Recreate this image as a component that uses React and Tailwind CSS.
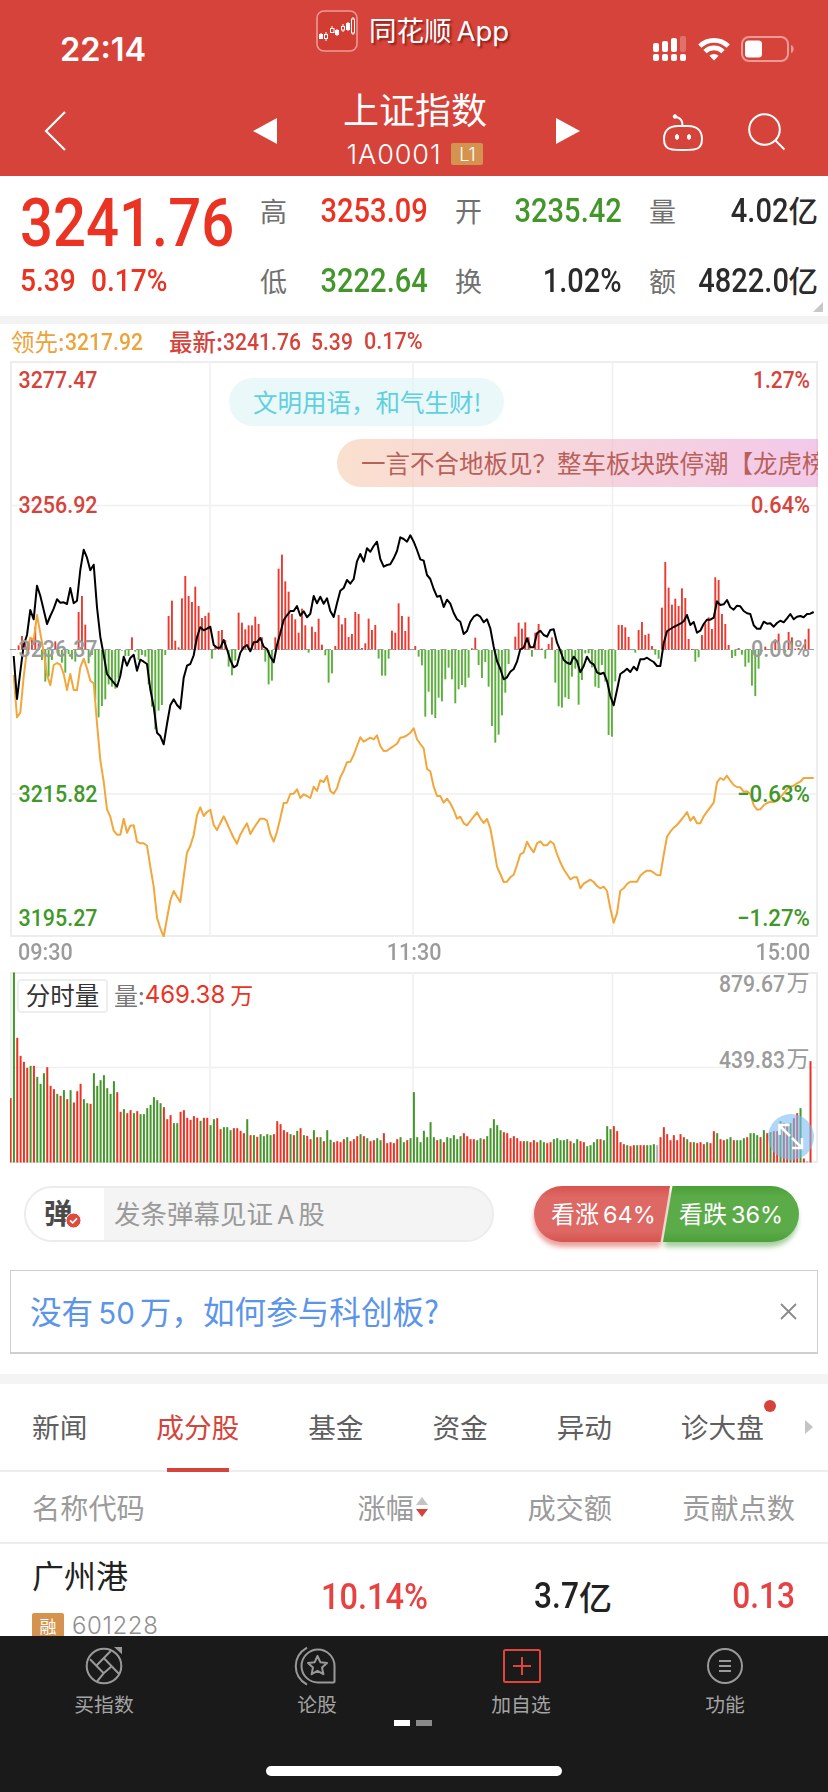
import React from 'react';

// one entry per minute, in thirds of a pixel
const PRICE = [
  378, 507, 425, 345, 315, 240, 268, 167, 197, 240, 282, 258, 236, 208, 218, 217, 222, 174, 220, 212,
  120, 59, 83, 121, 104, 232, 320, 375, 432, 445, 458, 470, 438, 380, 407, 384, 374, 422, 389, 395,
  402, 478, 530, 608, 618, 643, 582, 526, 508, 525, 536, 443, 407, 402, 376, 322, 292, 301, 296, 290,
  345, 353, 353, 330, 358, 390, 412, 406, 368, 352, 345, 364, 337, 336, 324, 350, 357, 380, 397, 345,
  310, 270, 256, 243, 243, 228, 257, 244, 262, 251, 198, 220, 200, 221, 205, 243, 261, 220, 182, 174,
  150, 161, 147, 94, 72, 95, 55, 65, 48, 35, 87, 110, 105, 103, 85, 63, 22, 27, 35, 16,
  35, 60, 88, 92, 135, 147, 177, 200, 197, 231, 209, 221, 249, 268, 275, 312, 303, 275, 260, 254,
  260, 277, 268, 295, 350, 393, 417, 448, 442, 425, 417, 395, 358, 353, 325, 352, 352, 310, 302, 315,
  320, 300, 298, 338, 362, 390, 398, 402, 380, 393, 427, 408, 380, 397, 403, 427, 432, 428, 453, 498,
  526, 480, 432, 425, 416, 426, 410, 421, 388, 388, 383, 390, 396, 408, 408, 340, 304, 297, 291, 286,
  281, 274, 255, 285, 276, 308, 302, 282, 269, 269, 263, 214, 225, 223, 210, 232, 239, 227, 229, 243,
  250, 252, 286, 296, 296, 275, 281, 280, 290, 279, 272, 277, 265, 252, 268, 260, 258, 262, 252, 251,
  246,
];

const LEAD = [
  435, 562, 548, 440, 360, 323, 330, 255, 310, 365, 435, 466, 405, 399, 404, 432, 480, 432, 480, 480,
  412, 386, 415, 452, 460, 580, 690, 755, 838, 860, 902, 914, 914, 866, 908, 887, 886, 935, 940, 940,
  947, 1010, 1070, 1163, 1195, 1220, 1165, 1112, 1083, 1100, 1116, 1040, 968, 948, 915, 856, 832, 858, 846, 839,
  885, 900, 880, 859, 880, 902, 924, 941, 914, 896, 880, 912, 895, 880, 866, 866, 872, 912, 935, 905,
  865, 819, 818, 792, 791, 778, 804, 793, 798, 804, 770, 783, 751, 756, 738, 783, 791, 775, 742, 722,
  697, 695, 675, 648, 622, 635, 629, 623, 628, 616, 648, 663, 662, 655, 648, 641, 623, 621, 616, 608,
  595, 628, 642, 655, 717, 724, 770, 798, 798, 818, 806, 820, 840, 866, 860, 880, 886, 873, 860, 847,
  865, 879, 867, 895, 950, 1010, 1032, 1056, 1055, 1042, 1034, 1005, 973, 967, 935, 953, 967, 940, 934, 946,
  946, 934, 941, 972, 997, 1018, 1033, 1048, 1042, 1042, 1075, 1061, 1055, 1049, 1056, 1068, 1075, 1070, 1083, 1135,
  1178, 1150, 1082, 1075, 1062, 1055, 1055, 1055, 1037, 1028, 1022, 1022, 1028, 1035, 1036, 975, 920, 905, 893, 885,
  873, 860, 846, 872, 860, 880, 880, 859, 845, 832, 818, 757, 744, 750, 737, 752, 765, 771, 772, 785,
  784, 792, 825, 839, 838, 826, 819, 815, 817, 812, 802, 790, 778, 770, 767, 760, 755, 744, 744, 744,
  744,
];

// positive is drawn up in red, negative down in green
const FORCE = [
  2, 14, 42, 20, 20, 35, 70, 20, -30, -95, -80, -30, 26, -18, -38, -68, -12, -28, -35, 114,
  162, 76, -40, -15, -150, -202, -168, -148, -103, -110, -116, -85, -2, -18, -18, 38, -5, -30, -15, -20,
  -103, -170, -238, -182, -165, -15, 102, 148, 28, 8, 155, 222, 162, 144, 190, 132, 96, 102, 112, -26,
  14, 57, 60, 30, -50, -76, -32, 112, 82, 62, 74, 74, 100, 78, 38, -35, -103, -92, 38, 244,
  286, 206, 175, 108, 92, 52, 124, 74, -8, 70, 54, 94, 16, -16, -98, -70, 12, 105, 77, 96,
  39, 48, 114, 108, 6, 20, 94, 60, 75, -26, -77, -77, -26, 58, 52, 140, 102, 57, 100, 2,
  12, -20, -46, -200, -125, -194, -204, -143, -154, -88, -53, -88, -160, -118, -105, -112, -83, 5, 37, -45,
  -84, -36, -110, -228, -278, -254, -196, -128, -42, 0, 40, 82, 64, 83, 38, -20, 52, 78, 4, -26,
  18, 38, -98, -169, -173, -142, -147, -80, -56, -164, -90, -10, -10, -52, -110, -114, -45, -95, -255, -260,
  -94, 75, 75, 68, 39, 0, -8, 60, 84, 45, 49, 12, -14, -26, 127, 264, 187, 136, 154, 132,
  185, 156, 33, 3, -35, -22, 45, 80, 98, 63, 218, 210, 108, 78, 15, -24, -18, 6, -14, -50,
  -38, -107, -138, -56, -4, 10, 2, -8, 32, 49, 2, -8, 54, 38, 4, 6, 4, 32, 64,
];

// sign carries the colour: positive red, negative green
const VOLUME = [
  193, -570, 374, 320, 302, 284, -290, 290, -257, -236, -268, 286, 230, 220, -206, 200, -217, 190, -217, 180,
  214, 236, -190, -178, 176, -268, -230, -247, -262, -223, -206, -244, 211, 152, -160, 148, 157, -148, 154, -145,
  -145, -163, -173, -196, -187, -178, 166, 130, 142, -118, -118, 152, 157, 134, 128, 139, 134, -125, 134, 134,
  -112, -130, 133, 100, -106, -106, -97, 103, 103, 95, 88, -130, 82, -82, 77, -85, -79, -85, -82, 85,
  124, 115, 97, 91, -85, 82, -95, 103, -82, 80, 70, -97, 76, -76, 64, -97, -68, 61, 64, 61,
  70, -76, 64, 70, 79, -85, 79, -73, 64, 67, -73, -67, 88, 58, 61, 58, 70, -76, -61, 67,
  -73, -211, -76, -61, -95, -76, -121, -76, 67, -70, 61, -76, -73, -82, -70, -79, 88, 79, 70, 70,
  -67, -73, 70, -79, -103, -130, -112, -97, 91, 88, 73, 79, 73, 64, 64, -64, 61, 67, 61, -67,
  -61, 58, 61, -70, -73, -67, -67, -70, 64, -58, -70, 64, 61, -49, -52, -61, -70, 70, -67, -109,
  -100, 109, 94, 61, 55, -52, 49, 52, -52, 52, 52, -52, -52, -55, 52, 76, 106, 85, 67, 82,
  67, 85, 76, -70, 61, -61, 58, 61, 55, -61, 58, 94, -88, 70, 67, -70, -76, 67, -67, -67,
  -73, 76, -88, -88, -82, 76, -97, 88, -91, 94, 94, -124, 118, 115, -118, 133, 148, -163, 12, 4,
  304,
];
const FLAT_MINUTES = [194, 239];

const toPoints = (series) => series.map((v, i) => `${((11 + i * 10) / 3).toFixed(1)},${((v + 507) / 3).toFixed(1)}`).join(' ');

const volumeColor = (v, i) => {
  if (FLAT_MINUTES.includes(i)) return '#b0b0b0';
  return v > 0 ? '#ea3323' : '#43962a';
};

// narrow numerals
const Num = ({ children, className = '' }) => (
  <span className={`inline-block whitespace-nowrap font-[Roboto] font-medium leading-none scale-x-[0.88] ${className}`}>
    {children}
  </span>
);

const StatusBar = () => (
  <div className="relative h-[88px]">
    <span className="absolute left-[60px] top-[34px] font-[Inter] text-[32.500px] font-semibold leading-8">22:14</span>
    <div className="absolute left-[316px] top-[10px] flex items-center gap-[11px]">
      <svg width="42" height="42" viewBox="0 0 42 42" fill="none">
        <rect x="1" y="1" width="40" height="40" rx="7" fill="#d13c33" stroke="#ec9a95" strokeWidth="1.6" />
        <g stroke="#fff" strokeWidth="1">
          <path d="M5 23v6M10 22v9M16 16v7M21 19v7M27 14v8M32 12v9M37 7v18" />
          <rect x="3.500" y="24.500" width="3" height="4" fill="#fff" />
          <rect x="8.500" y="24.500" width="3" height="4" fill="#d13c33" />
          <rect x="14.500" y="18.500" width="3.500" height="4" fill="#d13c33" />
          <rect x="19.500" y="20.500" width="3" height="4" fill="#fff" />
          <rect x="25.500" y="16.500" width="3" height="3.500" fill="#d13c33" />
          <rect x="30.500" y="13.500" width="3" height="6" fill="#fff" />
          <rect x="35.500" y="9" width="3" height="14" fill="#d13c33" />
        </g>
      </svg>
      <span className="text-[27.5px] leading-none [text-shadow:2px_2px_2px_rgba(90,10,5,0.6)]">
        同花顺<span className="ml-[5px] font-[Inter] text-[27.500px]">App</span>
      </span>
    </div>
    <div className="absolute left-[653px] top-[36px] flex items-center">
      <svg width="34" height="26" viewBox="0 0 34 26" fill="#fff">
        <rect x="0" y="7" width="6" height="9" rx="2" />
        <rect x="9" y="5" width="6" height="11" rx="2" />
        <rect x="18" y="2" width="6" height="14" rx="2" />
        <rect x="27" y="0" width="6" height="16" rx="2" opacity=".25" />
        <rect x="0" y="18" width="6" height="7" rx="2" />
        <rect x="9" y="18" width="6" height="7" rx="2" />
        <rect x="18" y="18" width="6" height="7" rx="2" />
        <rect x="27" y="18" width="6" height="7" rx="2" />
      </svg>
      <svg className="ml-[11px]" width="32" height="24" viewBox="0 0 32 24" fill="none" stroke="#fff" strokeWidth="4.600">
        <path d="M1.800 9.200a20.300 20.300 0 0 1 28.400 0" />
        <path d="M7 14.600a12.700 12.700 0 0 1 18 0" />
        <path d="M16 23.500l-4.600-4.700a6.500 6.500 0 0 1 9.200 0z" fill="#fff" stroke="none" />
      </svg>
      <svg className="ml-[11px]" width="54" height="26" viewBox="0 0 54 26" fill="none">
        <rect x="1" y="1" width="46" height="24" rx="7" stroke="#ec9a95" strokeWidth="2" />
        <rect x="4" y="4.500" width="17" height="17" rx="3.500" fill="#fff" />
        <path d="M50 9c3.500 1 3.500 7 0 8z" fill="#ec9a95" />
      </svg>
    </div>
  </div>
);

const TitleBar = () => (
  <div className="flex h-[88px] items-center justify-between pl-[44px] pr-[42px]">
    <div className="flex w-[233px] items-center justify-between">
      <svg className="mt-[-2px]" width="22" height="40" viewBox="0 0 22 40" fill="none" stroke="#fff" strokeWidth="2.200">
        <path d="M21 1L2 20l19 19" />
      </svg>
      <svg className="mt-[-2px]" width="24" height="26" viewBox="0 0 24 26" fill="#fff"><path d="M24 0v26L0 13z" /></svg>
    </div>
    <div className="flex flex-col items-center pr-[3px]">
      <h1 className="mt-[-10px] text-[36px] font-normal leading-[42px]">上证指数</h1>
      <div className="mt-[12px] flex items-center gap-[10px]">
        <span className="font-[Inter] text-[27px] font-light leading-[27px] tracking-[0.9px]">1A0001</span>
        <span className="flex h-[22px] w-8 items-center justify-center rounded-[2px] bg-[#d49450] font-[Inter] text-[18px] font-light">L1</span>
      </div>
    </div>
    <div className="flex w-[230px] items-center">
      <svg className="mt-[-2px]" width="24" height="26" viewBox="0 0 24 26" fill="#fff"><path d="M0 0v26l24-13z" /></svg>
      <svg className="ml-[83px]" width="40" height="38" viewBox="0 0 40 38" fill="none" stroke="#fff" strokeWidth="2">
        <path d="M15 13h10c9 0 14 5 14 13 0 7-3 10-8 10.500-8 .7-15 .7-22 0C4 36 1 33 1 26 1 18 6 13 15 13z" />
        <path d="M19.500 13c0-5-1-8-8-9.500" />
        <circle cx="12" cy="3.500" r="1.800" fill="#fff" strokeWidth="1" />
        <ellipse cx="14" cy="24" rx="1.600" ry="2.400" fill="#fff" strokeWidth="1" />
        <ellipse cx="26" cy="24" rx="1.600" ry="2.400" fill="#fff" strokeWidth="1" />
      </svg>
      <svg className="ml-[45px] mt-[-1px]" width="38" height="38" viewBox="0 0 38 38" fill="none" stroke="#fff" strokeWidth="2">
        <circle cx="16.500" cy="16.500" r="15.300" />
        <path d="M27.500 27.500l9 9" />
      </svg>
    </div>
  </div>
);

const QUOTES = [
  { label: '高', value: '3253.09', color: 'text-[#ea3323]' },
  { label: '开', value: '3235.42', color: 'text-[#43962a]' },
  { label: '量', value: '4.02', unit: '亿', color: 'text-[#2b2b2b]' },
  { label: '低', value: '3222.64', color: 'text-[#43962a]' },
  { label: '换', value: '1.02%', color: 'text-[#2b2b2b]' },
  { label: '额', value: '4822.0', unit: '亿', color: 'text-[#2b2b2b]' },
];

const QuotePanel = () => (
  <section className="relative flex h-[140px] pl-[20px]">
    <div className="w-[240px] text-[#ea3323]">
      <Num className="mt-[15px] origin-left text-[66px]">3241.76</Num>
      <div className="mt-[7px] flex text-[32px]">
        <Num className="w-[71px] origin-left">5.39</Num>
        <Num className="origin-left">0.17%</Num>
      </div>
    </div>
    <div className="grid w-[559px] grid-cols-[168px_167px_169px] grid-rows-[70px_70px] gap-x-[27px] pb-[2px]">
      {QUOTES.map(({ label, value, unit, color }) => (
        <div key={label} className="flex items-center justify-between pb-[2px]">
          <span className="text-[27px] leading-none text-[#707070]">{label}</span>
          <span className={`flex items-center ${color}`}>
            <Num className="origin-right text-[33px]">{value}</Num>
            {unit && <span className="text-[29.500px] font-medium leading-none">{unit}</span>}
          </span>
        </div>
      ))}
    </div>
    <span className="absolute bottom-1 right-[5px] border-b-[10px] border-l-[10px] border-b-[#c8c8c8] border-l-transparent" />
  </section>
);

const AXIS_LEFT = [
  ['3277.47', 27, '#d6433b'],
  ['3256.92', 152, '#d6433b'],
  ['3236.37', 296, '#9b9b9b'],
  ['3215.82', 441, '#3f9828'],
  ['3195.27', 565, '#3f9828'],
];

const AXIS_RIGHT = [
  ['1.27%', 27, 57, '#d6433b'],
  ['0.64%', 152, 59, '#d6433b'],
  ['0.00%', 296, 59, '#9b9b9b'],
  ['−0.63%', 441, 73, '#3f9828'],
  ['−1.27%', 565, 73, '#3f9828'],
];

const PriceChart = () => (
  <div className="relative mx-[10px] h-[576px] overflow-hidden">
    <svg width="808" height="576" viewBox="0 0 808 576" fill="none">
      <rect x="1" y="1" width="806" height="574" stroke="#ededed" strokeWidth="2" />
      <path d="M200 0v576M403 0v576M602.500 0v576M0 144.500h808M0 433h808" stroke="#f0f0f0" strokeWidth="1.600" />
      {FORCE.map((v, i) => (
        <rect
          key={i}
          x={(13 + i * 10) / 3}
          y={v > 0 ? 289 - v / 3 : 289}
          width="1.900"
          height={Math.abs(v) / 3}
          fill={v > 0 ? '#e93b30' : '#5cb03c'}
        />
      ))}
      <path d="M0 288.500h808" stroke="#9a9a9a" strokeWidth="1.200" strokeDasharray="6 4.500" />
      <polyline points={toPoints(LEAD)} stroke="#f2a73c" strokeWidth="2" strokeLinejoin="round" />
      <polyline points={toPoints(PRICE)} stroke="#000" strokeWidth="2" strokeLinejoin="round" />
      <g fontFamily="Roboto" fontSize="23.500" fontWeight="500">
        {AXIS_LEFT.map(([label, y, color]) => (
          <text key={label} x="8.500" y={y} fill={color} textLength="79" lengthAdjust="spacingAndGlyphs">{label}</text>
        ))}
        {AXIS_RIGHT.map(([label, y, width, color]) => (
          <text key={label} x="800" y={y} fill={color} textAnchor="end" textLength={width} lengthAdjust="spacingAndGlyphs">{label}</text>
        ))}
      </g>
    </svg>
    <div className="absolute left-[219px] top-[17px] flex h-12 w-[275px] items-center rounded-full bg-[#d8f3f6]/55 pl-[24px] text-[24.500px] text-[#5fd0de]">
      文明用语，和气生财!
    </div>
    <div className="absolute left-[327px] top-[78px] flex h-12 w-[560px] items-center whitespace-nowrap rounded-l-full bg-linear-to-r from-[#f7cfb4]/65 to-[#eaa5e2]/65 pl-[24px] text-[24.500px] text-[#b8605a]">
      一言不合地板见？整车板块跌停潮【龙虎榜
    </div>
  </div>
);

const VolumeChart = () => (
  <div className="relative mx-[10px] h-[192px]">
    <svg width="808" height="192" viewBox="0 0 808 192" fill="none">
      <rect x="1" y="1" width="806" height="189" stroke="#ededed" strokeWidth="2" />
      <path d="M200 0v190M403 0v190M602.500 0v190M0 95.500h808" stroke="#f0f0f0" strokeWidth="1.600" />
      {VOLUME.map((v, i) => (
        <rect key={i} x={i * 3.333 - 0.400} y={190.500 - Math.abs(v) / 3} width="2" height={Math.abs(v) / 3} fill={volumeColor(v, i)} />
      ))}
      <g fontFamily="Roboto" fontSize="23.500" fontWeight="500" fill="#9b9b9b" textAnchor="end">
        <text x="775" y="19.500" textLength="66" lengthAdjust="spacingAndGlyphs">879.67</text>
        <text x="775" y="95.500" textLength="66" lengthAdjust="spacingAndGlyphs">439.83</text>
      </g>
      <g fontFamily="'Noto Sans CJK SC'" fontSize="23" fill="#9b9b9b" textAnchor="end">
        <text x="799.500" y="19">万</text>
        <text x="799.500" y="95">万</text>
      </g>
      <circle cx="781" cy="165" r="23" fill="#7bbcf2" opacity=".6" />
      <path d="M780 164l-10-10M769.500 163v-10h10M782 166l9.500 9.500M792 166v10h-10" stroke="#fff" strokeWidth="2.500" />
    </svg>
    <div className="absolute left-[7px] top-[7px] flex items-center">
      <span className="flex h-[34px] w-[91px] items-center justify-center rounded border-2 border-[#eee] bg-white pb-[1px] text-[24.500px] leading-none text-[#333]">分时量</span>
      <span className="ml-[6px] mt-[-3px] text-[24px] leading-none text-[#777]">量:</span>
      <span className="mt-[-3px] flex items-center gap-[5px] text-[#ea3323]">
        <span className="font-[Inter] text-[24px] leading-none">469.38</span>
        <span className="text-[23px] leading-none">万</span>
      </span>
    </div>
  </div>
);

const BarrageRow = () => (
  <div className="flex h-[106px] items-start justify-between pl-[24px] pr-[29px] pt-[22px]">
    <div className="flex h-[56px] w-[470px] items-center overflow-hidden rounded-full border-2 border-[#ececec] bg-[#f4f4f4]">
      <div className="relative flex h-full w-[78px] items-center bg-white pb-[3px] pl-[18px]">
        <span className="text-[28.500px] font-bold leading-none text-[#4a4a4a]">弹</span>
        <svg className="absolute left-[39px] top-[24px]" width="17" height="17" viewBox="0 0 17 17" fill="none">
          <circle cx="8.500" cy="8.500" r="7.500" fill="#de4a3c" stroke="#fff" />
          <path d="M5 8.300l2.700 2.600L12 6.300" stroke="#fff" strokeWidth="1.700" />
        </svg>
      </div>
      <span className="pl-[10px] text-[26.500px] leading-none text-[#9a9a9a]">
        发条弹幕见证<span className="mx-[4px] font-[Inter] text-[25px]">A</span>股
      </span>
    </div>
    <div className="relative h-[56px] w-[265px] text-[24px] text-white">
      <svg className="absolute inset-0 overflow-visible" width="265" height="56" viewBox="0 0 265 56">
        <defs>
          <filter id="glow" x="-10%" y="-20%" width="120%" height="150%"><feGaussianBlur stdDeviation="2.500" /></filter>
          <linearGradient id="up" x1="0" y1="0" x2="0" y2="1">
            <stop offset="0" stopColor="#d6544f" /><stop offset=".2" stopColor="#de6864" /><stop offset=".8" stopColor="#de6864" /><stop offset="1" stopColor="#d5544e" />
          </linearGradient>
          <linearGradient id="down" x1="0" y1="0" x2="0" y2="1">
            <stop offset="0" stopColor="#4b9f38" /><stop offset=".2" stopColor="#5cab49" /><stop offset=".8" stopColor="#5cab49" /><stop offset="1" stopColor="#4b9f38" />
          </linearGradient>
        </defs>
        <path d="M28 5H136L126 61H28A28 28 0 0 1 28 5z" fill="#d6433b" opacity=".5" filter="url(#glow)" />
        <path d="M140 5H236A28 28 0 0 1 236 61H130z" fill="#4b9f38" opacity=".5" filter="url(#glow)" />
        <path d="M28 0H136L126.500 56H28A28 28 0 0 1 28 0z" fill="url(#up)" />
        <path d="M138.500 0H237A28 28 0 0 1 237 56H129z" fill="url(#down)" />
      </svg>
      <div className="relative flex h-full items-center pl-[17px] leading-none">
        <span className="w-[128px]">看涨<span className="ml-[4px] font-[Inter] text-[23.500px]">64%</span></span>
        <span>看跌<span className="ml-[4px] font-[Inter] text-[23.500px]">36%</span></span>
      </div>
    </div>
  </div>
);

const Promo = () => (
  <div className="mx-[10px] flex h-[84px] items-center justify-between border border-b-2 border-[#cfcfcf] pl-[19px] pr-[20px]">
    <span className="text-[31.600px] leading-none text-[#5b95ea]">
      没有<span className="mx-[5px] font-[Inter] text-[29.500px]">50</span>万，如何参与科创板?
    </span>
    <svg width="17" height="17" viewBox="0 0 17 17" stroke="#8a8a8a" strokeWidth="1.800"><path d="M1 1l15 15M16 1L1 16" /></svg>
  </div>
);

const TABS = ['新闻', '成分股', '基金', '资金', '异动', '诊大盘'];

const Tabs = () => (
  <nav className="relative flex h-[88px] items-center justify-between border-b-2 border-[#ededed] pl-8 pr-[15px] text-[27.700px] text-[#5f5f5f]">
    <div className="flex h-full w-[732px] items-center justify-between">
      {TABS.map((tab) => (
        <span key={tab} className={`relative flex h-full items-center ${tab === '成分股' ? 'text-[#d6433b]' : ''}`}>
          {tab}
          {tab === '成分股' && <i className="absolute bottom-[-2px] left-[11px] h-1 w-[62px] bg-[#d6433b]" />}
          {tab === '诊大盘' && <i className="absolute right-[-12px] top-4 h-3 w-3 rounded-full bg-[#d6433b]" />}
        </span>
      ))}
    </div>
    <svg width="8" height="14" viewBox="0 0 8 14" fill="#c4c4c4"><path d="M0 0v14l8-7z" /></svg>
  </nav>
);

const StockTable = () => (
  <section className="h-[164px] overflow-hidden">
    <div className="grid h-[72px] grid-cols-[250px_146px_184px_183px] items-center border-b-2 border-[#ededed] pl-8 text-right text-[28.200px] text-[#9b9b9b]">
      <span className="text-left">名称代码</span>
      <span className="flex items-center justify-end gap-[2px]">
        涨幅
        <svg width="12" height="22" viewBox="0 0 12 22"><path d="M0 9l6-8 6 8z" fill="#c4c4c4" /><path d="M0 13l6 8 6-8z" fill="#d6433b" /></svg>
      </span>
      <span>成交额</span>
      <span>贡献点数</span>
    </div>
    <div className="grid h-[104px] grid-cols-[250px_146px_184px_183px] items-center pl-8 text-right text-[36px]">
      <div className="flex h-full flex-col pt-[12px] text-left">
        <span className="text-[32px] leading-[36px] text-[#222]">广州港</span>
        <div className="mt-[21px] flex items-center gap-2">
          <span className="flex h-[25px] w-8 items-center justify-center rounded-[2px] bg-[#d49450] text-[17px] leading-none text-white">融</span>
          <span className="mt-[1px] font-[Inter] text-[24px] font-light leading-none tracking-[0.6px] text-[#8f8f8f]">601228</span>
        </div>
      </div>
      <Num className="origin-right text-[37px] text-[#e84142]">10.14%</Num>
      <span className="flex items-center justify-end text-[#222]"><Num className="origin-right">3.7</Num><span className="text-[33px] font-medium leading-none">亿</span></span>
      <Num className="origin-right text-[#e84142]">0.13</Num>
    </div>
  </section>
);

const ACTIONS = [
  {
    label: '买指数',
    color: '#999',
    icon: (
      <>
        <circle cx="20" cy="20" r="17.300" />
        <path d="M26.700 5L12 20M6 13.300l13.700 14M13.700 35v-.5l6-7.200 8-7M20 12.300l15.300 16" />
        <path d="M30 1h8v7.300z" fill="#999" stroke="none" />
      </>
    ),
  },
  {
    label: '论股',
    color: '#999',
    icon: (
      <>
        <path d="M21 3.500a16.500 16.500 0 0 1 16.500 16.500v15.500a1 1 0 0 1-1 1H21a16.500 16.500 0 0 1 0-33z" />
        <path d="M10 1.700C-5 10.500-5 30 10 38.700" />
        <path d="M20.500 10l2.800 6.200 6.700.8-5 4.500 1.400 6.700-5.900-3.400-5.900 3.400 1.400-6.700-5-4.500 6.700-.8z" strokeLinejoin="round" />
      </>
    ),
  },
  {
    label: '加自选',
    color: '#e0443a',
    icon: (
      <>
        <rect x="3" y="4" width="36" height="32" rx="1.500" />
        <path d="M21 11v18M12 20h18" />
      </>
    ),
  },
  {
    label: '功能',
    color: '#999',
    icon: (
      <>
        <circle cx="20" cy="20" r="17" />
        <path d="M14 15h12M14 20h12M14 25h12" />
      </>
    ),
  },
];

const BottomBar = () => (
  <footer className="relative h-[156px] bg-[#1a1a1a]">
    <div className="grid grid-cols-[208px_218px_190px_218px] pt-[10px]">
      {ACTIONS.map(({ label, color, icon }) => (
        <div key={label} className="flex flex-col items-center">
          <svg className="overflow-visible" width="40" height="40" viewBox="0 0 40 40" fill="none" stroke={color} strokeWidth="2">{icon}</svg>
          <span className="mt-[7px] text-[19.800px] leading-[22px] text-[#a3a3a3]">{label}</span>
        </div>
      ))}
    </div>
    <div className="mt-[5px] flex justify-center gap-[6px] pr-[2px]">
      <i className="h-[6px] w-4 bg-white" />
      <i className="h-[6px] w-4 bg-[#8a8a8a]" />
    </div>
    <div className="mx-auto mt-[40px] h-[10px] w-[296px] rounded-full bg-white" />
  </footer>
);

export default function App() {
  return (
    <div className="flex h-[1792px] w-[828px] flex-col overflow-hidden bg-white font-['Noto_Sans_CJK_SC',sans-serif]">
      <header className="h-[176px] bg-[#d6433b] text-white">
        <StatusBar />
        <TitleBar />
      </header>
      <QuotePanel />
      <div className="h-[8px] bg-[#f3f3f3]" />
      <div className="flex h-[37px] items-center pb-[2px] pl-[11px] text-[23.500px] leading-none">
        <span className="flex w-[158px] items-center text-[#eda33b]">领先:<Num className="origin-left text-[24px]">3217.92</Num></span>
        <span className="flex items-center font-medium text-[#d6433b]">
          最新:
          <Num className="w-[88px] origin-left text-[24px]">3241.76</Num>
          <Num className="w-[53px] origin-left text-[24px]">5.39</Num>
          <Num className="origin-left text-[24.500px]">0.17%</Num>
        </span>
      </div>
      <PriceChart />
      <div className="flex h-[35px] items-center justify-between px-[18px] pb-[4px] text-[#9b9b9b]">
        <Num className="origin-left text-[24.500px]">09:30</Num>
        <Num className="text-[24.500px]">11:30</Num>
        <Num className="origin-right text-[24.500px]">15:00</Num>
      </div>
      <VolumeChart />
      <BarrageRow />
      <Promo />
      <div className="mt-[20px] h-[10px] bg-[#f4f4f4]" />
      <Tabs />
      <StockTable />
      <BottomBar />
    </div>
  );
}
